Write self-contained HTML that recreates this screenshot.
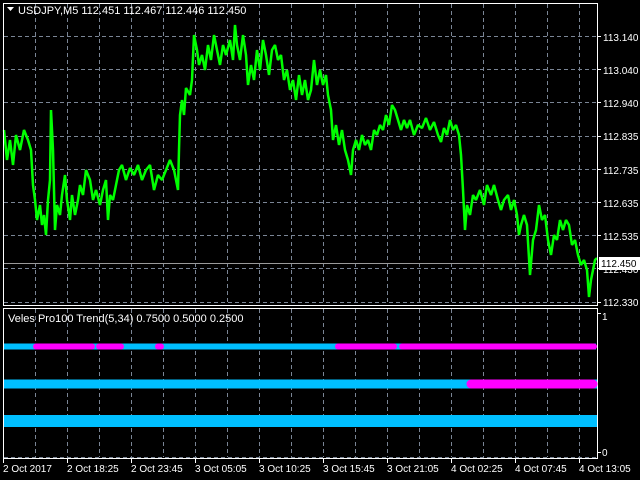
<!DOCTYPE html>
<html><head><meta charset="utf-8"><style>
html,body{margin:0;padding:0;background:#000;width:640px;height:480px;overflow:hidden}
svg{display:block}
text{font-family:"Liberation Sans",sans-serif;font-size:10px;fill:#fff}
.big{font-size:11px}
</style></head><body>
<svg width="640" height="480" viewBox="0 0 640 480">
<rect width="640" height="480" fill="#000"/>
<g stroke="#7a8595" stroke-width="1" stroke-dasharray="4,3">
<path d="M4 36.5H597M4 69.5H597M4 102.5H597M4 136.5H597M4 169.5H597M4 202.5H597M4 235.5H597M4 268.5H597M4 302.5H597"/>
<path d="M35.5 4V304M67.5 4V304M99.5 4V304M131.5 4V304M163.5 4V304M195.5 4V304M227.5 4V304M259.5 4V304M291.5 4V304M323.5 4V304M355.5 4V304M387.5 4V304M419.5 4V304M451.5 4V304M483.5 4V304M515.5 4V304M547.5 4V304M579.5 4V304"/>
<path d="M35.5 309V457M67.5 309V457M99.5 309V457M131.5 309V457M163.5 309V457M195.5 309V457M227.5 309V457M259.5 309V457M291.5 309V457M323.5 309V457M355.5 309V457M387.5 309V457M419.5 309V457M451.5 309V457M483.5 309V457M515.5 309V457M547.5 309V457M579.5 309V457"/>
<path d="M4 457.5H597"/>
</g>
<line x1="4" y1="263.5" x2="597" y2="263.5" stroke="#9a9a9a"/>
<polyline fill="none" stroke="#00ff00" stroke-width="2.5" stroke-linejoin="bevel" points="4,130 7,160 10,140 13,165 16,135 20,150 24,130 28,140 31,150 33,185 35,200 37,220 40,205 42,225 44,215 46,235 48,200 50,180 51,110 53,150 55,230 57,205 60,215 62,195 65,175 67,200 70,220 72,195 75,215 78,200 80,185 83,195 86,170 90,180 93,200 96,190 100,205 103,190 106,180 108,220 110,195 113,200 116,185 119,170 122,165 126,180 130,168 134,175 138,165 142,180 146,170 150,165 154,190 158,175 162,180 166,170 170,160 174,170 178,190 179,150 180,115 182,100 184,115 186,88 190,95 192,80 194,35 197,50 199,65 202,55 205,70 208,45 211,60 214,35 217,50 220,65 223,45 226,55 230,40 233,60 235,25 237,45 240,60 243,35 246,55 248,85 251,65 254,80 257,50 260,70 263,40 266,55 269,75 272,50 275,45 278,60 281,55 284,80 287,70 290,90 293,80 296,100 299,75 302,95 305,80 308,100 311,90 314,60 317,85 320,70 323,85 326,75 328,95 331,110 333,140 336,125 339,145 342,130 345,150 348,160 351,175 353,150 356,140 359,150 362,135 365,145 368,140 371,150 374,130 377,135 380,125 383,130 386,115 389,125 392,105 395,110 398,120 401,130 404,120 407,128 410,120 414,135 418,125 422,128 426,118 430,130 434,122 438,135 441,142 444,128 447,135 450,120 453,130 456,125 459,135 461,155 463,190 465,230 467,205 470,215 473,195 476,200 480,190 484,205 487,185 491,195 494,185 498,200 501,210 504,200 508,195 511,210 514,200 517,215 519,235 521,225 524,215 527,225 530,275 533,240 536,230 539,205 542,220 545,215 548,240 551,255 554,235 557,240 560,220 563,230 566,220 569,225 572,245 575,240 578,255 581,265 584,260 587,270 589,297 591,280 593,270 595,260 597,258"/>
<rect x="3.5" y="3.5" width="594" height="302" fill="none" stroke="#fff"/>
<rect x="3.5" y="308.5" width="594" height="150" fill="none" stroke="#fff"/>
<line x1="4" y1="346.5" x2="596" y2="346.5" stroke="#00bfff" stroke-width="6"/>
<g stroke="#ff00ff" stroke-width="6" stroke-linecap="round">
<line x1="36" y1="346.5" x2="92" y2="346.5"/>
<line x1="99" y1="346.5" x2="121" y2="346.5"/>
<line x1="158" y1="346.5" x2="161" y2="346.5"/>
<line x1="338" y1="346.5" x2="394" y2="346.5"/>
<line x1="402" y1="346.5" x2="594" y2="346.5"/>
</g>
<line x1="4" y1="384" x2="597" y2="384" stroke="#00bfff" stroke-width="9"/>
<line x1="471" y1="384" x2="593" y2="384" stroke="#ff00ff" stroke-width="9" stroke-linecap="round"/>
<line x1="4" y1="421" x2="597" y2="421" stroke="#00bfff" stroke-width="12"/>
<path d="M7 7h7l-3.5 4z" fill="#fff"/>
<text class="big" x="18" y="14">USDJPY,M5  112.451 112.467 112.446 112.450</text>
<text class="big" x="8" y="322">Veles Pro100 Trend(5,34) 0.7500 0.5000 0.2500</text>
<g stroke="#fff"><path d="M598 36.5h3M598 69.5h3M598 102.5h3M598 136.5h3M598 169.5h3M598 202.5h3M598 235.5h3M598 268.5h3M598 302.5h3M598 313.5h3M598 452.5h3"/></g>
<text x="603" y="41">113.140</text>
<text x="603" y="74">113.040</text>
<text x="603" y="107">112.940</text>
<text x="603" y="140">112.835</text>
<text x="603" y="174">112.735</text>
<text x="603" y="207">112.635</text>
<text x="603" y="240">112.535</text>
<text x="603" y="273">112.430</text>
<text x="603" y="306">112.330</text>
<rect x="599" y="257" width="41" height="13" fill="#fff"/>
<text x="601" y="267" style="fill:#000">112.450</text>
<text x="602" y="320">1</text>
<text x="602" y="456">0</text>
<g stroke="#fff"><path d="M3.5 458v5M67.5 458v5M131.5 458v5M195.5 458v5M259.5 458v5M323.5 458v5M387.5 458v5M451.5 458v5M515.5 458v5M579.5 458v5"/></g>
<text x="3" y="472">2 Oct 2017</text>
<text x="67" y="472">2 Oct 18:25</text>
<text x="131" y="472">2 Oct 23:45</text>
<text x="195" y="472">3 Oct 05:05</text>
<text x="259" y="472">3 Oct 10:25</text>
<text x="323" y="472">3 Oct 15:45</text>
<text x="387" y="472">3 Oct 21:05</text>
<text x="451" y="472">4 Oct 02:25</text>
<text x="515" y="472">4 Oct 07:45</text>
<text x="579" y="472">4 Oct 13:05</text>
</svg>
</body></html>
